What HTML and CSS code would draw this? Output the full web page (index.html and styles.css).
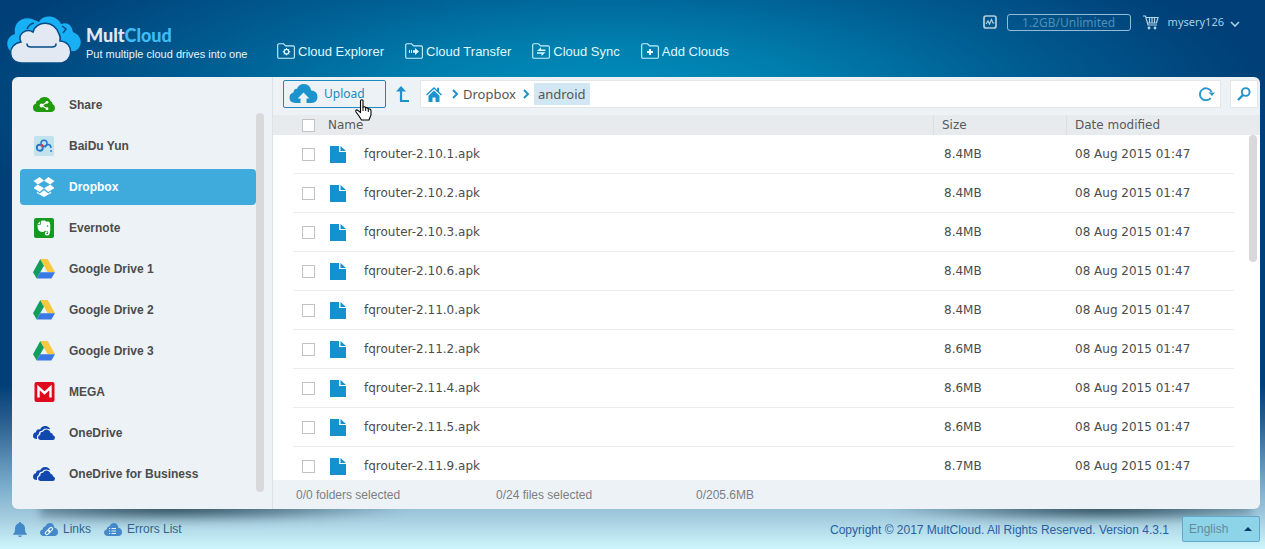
FILE: index.html
```
<!DOCTYPE html>
<html lang="en">
<head>
<meta charset="utf-8">
<title>MultCloud</title>
<link rel="stylesheet" href="styles.css">
</head>
<body>
<svg class="defs" aria-hidden="true">
  <symbol id="folder" viewBox="0 0 18 16"><path d="M.7 14V2Q.7.8 2 .8h4.6l2 2.1H16q1.400 0 1.400 1.300V14q0 1.300-1.400 1.300H2Q.7 15.300.7 14Z" fill="none" stroke="#c9f1fb" stroke-width="1.100"/></symbol>
  <symbol id="gdrive" viewBox="0 0 22 20"><path d="M7.300 0 11 6.500 3.700 19.500 0 13.200Z" fill="#119e5c"/><path d="M7.300 0h7.400L22 13.200h-7.400Z" fill="#f8c83e"/><path d="M7.300 13.200H22l-3.600 6.300H3.700Z" fill="#3a78e8"/></symbol>
  <symbol id="onedrive" viewBox="0 0 22 15"><path d="M0 10.500C0 8 1.500 7 3 6.800 3 4.500 5 3.500 7 4 8.500.7 11.500 0 14 .8q2.500.8 3.300 3L15.500 3.500Q11.500 2 9 5.200 5.800 5.300 5.800 8.700 3.500 9.500 4 13.500 0 13.500 0 10.500Z" fill="#1048ae"/><path d="M7.500 14.600Q5 14.300 5 11.900q.2-2.200 2.300-2.400Q7 6.300 10 6.200 11.700 3.300 14.800 4.200q2.400.8 2.900 3.400 2.100-.1 2.300 2.100 2 .6 2 2.400 0 2.500-2.400 2.500Z" fill="#1048ae"/></symbol>
  <symbol id="cloud" viewBox="0 0 18 13"><path d="M4 13C1.500 13 0 11.500 0 9.600 0 7.800 1.200 6.700 2.800 6.400 2.800 4.300 4.200 3.400 5.400 3.500 6.200 1.200 7.800 0 10 0q3.800.2 4.400 4.800Q18 5.600 18 9q0 4-4 4Z" fill="#4389c9"/></symbol>
  <symbol id="file" viewBox="0 0 16 17"><path d="M0 0h9v6h7v11H0Z" fill="#1592ce"/><path d="M10.500 0 16 5h-5.500Z" fill="#1592ce"/></symbol>
  <symbol id="chev" viewBox="0 0 7 10"><path d="m1 1 4 4-4 4" fill="none" stroke="#1c93cc" stroke-width="2"/></symbol>
</svg>
<div class="app">
<header class="top">
  <a class="brand" href="#">
    <svg class="logo" viewBox="0 0 74 48" aria-hidden="true"><path d="M6 37C-2 33-2 21 8 18 6 7 15 0 25 3l7 3C36-2 50-1 54 8q10-3 12 8c10 4 10 15 2 19Z" fill="#18b0f4"/><path d="M15 47C0 47 0 28 14 26 10 18 19 12 26 16 29 4 48 4 52 18q2 3 1 7c15 1 14 22-1 22Z" fill="#e2e9f3" stroke="#044b85" stroke-width="1.500"/><path d="M20 13q2-5 7-6M55 10l4 3-3 4" fill="none" stroke="#044b85" stroke-width="1.500"/><path d="M20 28q0 3 4 3h21q4 0 4-3" fill="none" stroke="#044b85" stroke-width="1.500" stroke-linecap="round"/></svg>
    <span class="brand-text"><span class="name">Mult<b>Cloud</b></span><span class="slogan">Put multiple cloud drives into one</span></span>
  </a>
  <nav class="nav">
    <a href="#"><svg viewBox="0 0 18 16"><use href="#folder"/><circle cx="9.500" cy="8.700" r="2.300" fill="none" stroke="#d9f7fd" stroke-width="1.400"/><path d="M9.500 5v1.200M9.500 11.200v1.200M5.800 8.700H7M12 8.700h1.200M6.900 6.100l.8.800M11.300 10.500l.8.800M6.900 11.300l.8-.8M11.300 6.900l.8-.8" stroke="#d9f7fd"/></svg>Cloud Explorer</a>
    <a href="#"><svg viewBox="0 0 18 16"><use href="#folder"/><path d="M4.500 7v3M6.500 7v3" stroke="#d9f7fd"/><path d="M8 7.300h2V5l4 3.500-4 3.500V9.700H8Z" fill="#d9f7fd"/></svg>Cloud Transfer</a>
    <a href="#"><svg viewBox="0 0 18 16"><use href="#folder"/><path d="M5 8 9 4.300v2.200h4.500V8ZM13.500 9.200 9.500 13v-2.300H5V9.200Z" fill="#d9f7fd"/></svg>Cloud Sync</a>
    <a href="#"><svg viewBox="0 0 18 16"><use href="#folder"/><path d="M9 6v6M6 9h6" stroke="#e5fbff" stroke-width="2"/></svg>Add Clouds</a>
  </nav>
  <div class="account">
    <svg class="meter" viewBox="0 0 14 14"><rect x="1" y="1" width="12" height="12" rx="2" fill="none" stroke="#b4cfdd" stroke-width="1.700"/><path d="m3 9 2-3 1.500 3L8.500 4.500 10 8h1.500" fill="none" stroke="#b4cfdd" stroke-width="1.200"/></svg>
    <span class="quota">1.2GB/Unlimited</span>
    <svg class="cart" viewBox="0 0 16 15"><path d="M0 1h2.500L5 10h9M3 2.500h12L13.500 8H4.500M6.500 3v5M9 3v5M11.500 3v5" fill="none" stroke="#b4d4e8" stroke-width="1.200"/><circle cx="6" cy="13" r="1.400" fill="#b4d4e8"/><circle cx="12" cy="13" r="1.400" fill="#b4d4e8"/></svg>
    <button class="user">mysery126<svg viewBox="0 0 10 6"><path d="m1 1 4 4 4-4" fill="none" stroke="#a9cfe8" stroke-width="1.600"/></svg></button>
  </div>
</header>
<div class="stage">
<div class="panel">
  <aside class="side">
    <ul>
      <li><a href="#"><svg viewBox="0 0 22 20"><path d="M4 17Q0 16.500 0 12.500 0 9.500 2.800 8.700 3 5.500 6 5.300 7.500 2 11.500 2 16 2 17.700 6.300 19.500 6.600 19.500 9 22 10 22 13t-3.500 4Z" fill="#219a0d"/><path d="m14.500 7-6 3.500 6 3.500" fill="none" stroke="#fff" stroke-width="1.200"/><circle cx="14" cy="7.300" r="1.400" fill="#fff"/><circle cx="8.500" cy="10.500" r="1.900" fill="#fff"/><circle cx="14" cy="13.700" r="1.400" fill="#fff"/></svg>Share</a></li>
      <li><a href="#"><svg viewBox="0 0 22 20"><rect x="1" width="20" height="20" rx="1.500" fill="#c2e3ee"/><circle cx="6.800" cy="11.800" r="3" fill="none" stroke="#2278c8" stroke-width="1.900"/><circle cx="11" cy="7.300" r="3" fill="none" stroke="#2278c8" stroke-width="1.500"/><path d="M12 11.500q1-3.500 3.500-3t2.500 3.500" fill="none" stroke="#2278c8" stroke-width="1.400"/><circle cx="9" cy="9.600" r="1.500" fill="#e8394d"/><circle cx="18" cy="15" r=".9" fill="#2278c8"/></svg>BaiDu Yun</a></li>
      <li><a class="on" href="#"><svg viewBox="0 0 22 21" fill="#fff"><path d="M6.500 0 0 4.300l4.500 3.600L11 3.900ZM15.500 0 11 3.900l6.500 4L22 4.300ZM0 11.500l4.500-3.600 6.500 4-4.500 3.800ZM22 11.500l-4.500-3.600-6.500 4 4.500 3.800ZM3.500 15.300l3 2L11 13.800l4.500 3.500 3-2v1.500L11 21l-7.500-4.200Z"/></svg>Dropbox</a></li>
      <li><a href="#"><svg viewBox="0 0 22 20"><rect x="1" width="20" height="20" rx="2" fill="#149a21"/><path d="M4.500 6.800h3.300V3.200l1.200-.6h3l1 1h2.500q1.500.3 1.700 3 .5 5.500-.7 9.500-.5 1.500-2.500 1.500-2.200-.2-2.200-2.200t2-2h.5v1.700h-1v1h1.600q.9-2-.3-3.100-1.700.8-2.600-.4-.5 1.600-2.800 1.300-2.500-.2-3.500-1.400Q4.300 10 4.500 6.800ZM4.600 5.900 7 3.400v2.500Z" fill="#fff"/><circle cx="14.500" cy="8" r=".8" fill="#149a21"/></svg>Evernote</a></li>
      <li><a href="#"><svg><use href="#gdrive"/></svg>Google Drive 1</a></li>
      <li><a href="#"><svg><use href="#gdrive"/></svg>Google Drive 2</a></li>
      <li><a href="#"><svg><use href="#gdrive"/></svg>Google Drive 3</a></li>
      <li><a href="#"><svg viewBox="0 0 22 20"><rect x="1.500" width="20" height="20" rx="2" fill="#df0a1c"/><path d="M5.500 15.500V5.500l6 5.500 6-5.500v10" fill="none" stroke="#fff" stroke-width="2.400"/></svg>MEGA</a></li>
      <li><a href="#"><svg><use href="#onedrive"/></svg>OneDrive</a></li>
      <li><a href="#"><svg><use href="#onedrive"/></svg>OneDrive for Business</a></li>
    </ul>
    <div class="track"></div>
  </aside>
  <main class="main">
    <div class="tools">
      <button class="upload"><svg viewBox="0 0 28 20"><path d="M6 19Q0 18.500 0 13.500 0 9.500 4 8.500 4 5 7.500 4.700 9 0 14.500 0 20.500.3 21.700 6.500 28 7 28 13q0 5.500-6 6h-5v-4.500h2.800L14 8.500l-5.800 6H11V19Z" fill="#1c93cc"/></svg>Upload
        <svg class="pointer" viewBox="0 0 17 22"><path d="M5.500 13.500V2q0-1.300 1.300-1.300T8 2v6q2-.8 2.700.8 2-.5 2.500 1Q16 9.500 16 12v4l-2 5H6.500L4 17l-3-4q-.8-2 1-2.200Z" fill="#fff" stroke="#000" stroke-width="1.100"/><path d="M8 8v4M10.700 8.800V12M13.300 9.800V13" stroke="#000"/></svg></button>
      <button class="up" aria-label="Up one level"><svg viewBox="0 0 14 17"><path d="M6 15V4" stroke="#1c93cc" stroke-width="2.200"/><path d="M1 5.500 6 0l5 5.500Z" fill="#1c93cc"/><path d="M5 14.900H14" stroke="#1c93cc" stroke-width="2"/></svg></button>
      <div class="path">
        <a class="home" href="#" aria-label="Home"><svg viewBox="0 0 16 15"><path d="M8 0 0 7.500l1 1 7-6.500 7 6.500 1-1-3-2.800V.8h-1.900V3ZM8 3.600 2.500 8.700V15h4v-4.500h3V15h4V8.700Z" fill="#1c93cc"/></svg></a>
        <svg class="chev"><use href="#chev"/></svg><a href="#">Dropbox</a><svg class="chev"><use href="#chev"/></svg><a class="here" href="#">android</a>
        <button class="reload" aria-label="Refresh"><svg viewBox="0 0 16 14"><path d="M11.700 11A6 6 0 1 1 12.500 5" fill="none" stroke="#2a98cc" stroke-width="1.900"/><path d="M9.500 5.500H16L13 9Z" fill="#2a98cc"/></svg></button>
      </div>
      <button class="search" aria-label="Search"><svg viewBox="0 0 14 14"><circle cx="8.700" cy="5" r="3.900" fill="none" stroke="#2293c8" stroke-width="1.900"/><path d="m6 8-5 5" stroke="#2293c8" stroke-width="2.400"/></svg></button>
    </div>
    <div class="list">
      <table>
        <colgroup><col class="c-check"><col class="c-name"><col class="c-size"><col class="c-date"></colgroup>
        <thead><tr><th><input type="checkbox" aria-label="Select all"></th><th>Name</th><th>Size</th><th>Date modified</th></tr></thead>
        <tbody>
          <tr><td><input type="checkbox" id="f1"></td><td><label for="f1"><svg><use href="#file"/></svg>fqrouter-2.10.1.apk</label></td><td>8.4MB</td><td>08 Aug 2015 01:47</td></tr>
          <tr><td><input type="checkbox" id="f2"></td><td><label for="f2"><svg><use href="#file"/></svg>fqrouter-2.10.2.apk</label></td><td>8.4MB</td><td>08 Aug 2015 01:47</td></tr>
          <tr><td><input type="checkbox" id="f3"></td><td><label for="f3"><svg><use href="#file"/></svg>fqrouter-2.10.3.apk</label></td><td>8.4MB</td><td>08 Aug 2015 01:47</td></tr>
          <tr><td><input type="checkbox" id="f4"></td><td><label for="f4"><svg><use href="#file"/></svg>fqrouter-2.10.6.apk</label></td><td>8.4MB</td><td>08 Aug 2015 01:47</td></tr>
          <tr><td><input type="checkbox" id="f5"></td><td><label for="f5"><svg><use href="#file"/></svg>fqrouter-2.11.0.apk</label></td><td>8.4MB</td><td>08 Aug 2015 01:47</td></tr>
          <tr><td><input type="checkbox" id="f6"></td><td><label for="f6"><svg><use href="#file"/></svg>fqrouter-2.11.2.apk</label></td><td>8.6MB</td><td>08 Aug 2015 01:47</td></tr>
          <tr><td><input type="checkbox" id="f7"></td><td><label for="f7"><svg><use href="#file"/></svg>fqrouter-2.11.4.apk</label></td><td>8.6MB</td><td>08 Aug 2015 01:47</td></tr>
          <tr><td><input type="checkbox" id="f8"></td><td><label for="f8"><svg><use href="#file"/></svg>fqrouter-2.11.5.apk</label></td><td>8.6MB</td><td>08 Aug 2015 01:47</td></tr>
          <tr><td><input type="checkbox" id="f9"></td><td><label for="f9"><svg><use href="#file"/></svg>fqrouter-2.11.9.apk</label></td><td>8.7MB</td><td>08 Aug 2015 01:47</td></tr>
        </tbody>
      </table>
      <div class="thumb"></div>
    </div>
    <div class="status"><span>0/0 folders selected</span><span>0/24 files selected</span><span>0/205.6MB</span></div>
  </main>
</div>
</div>
<footer class="foot">
  <a class="bell" href="#" aria-label="Notifications"><svg viewBox="0 0 14 15"><path d="M7 0q1.200 0 1.300 1.300Q12 2.300 12 7q0 4 2 5v.8H0V12q2-1 2-5 0-4.700 3.700-5.700Q5.800 0 7 0ZM5 13.500h4Q8.500 15 7 15t-2-1.500Z" fill="#4389c9"/></svg></a>
  <a href="#"><svg viewBox="0 0 18 13"><use href="#cloud"/><g fill="none" stroke="#e4f4fb" stroke-width="1.200" transform="rotate(-45 9 8)"><rect x="4.500" y="6.500" width="5" height="3" rx="1.500"/><rect x="8.500" y="6.500" width="5" height="3" rx="1.500"/></g></svg>Links</a>
  <a href="#"><svg viewBox="0 0 18 13"><use href="#cloud"/><path d="M5 5.500h1.200M5 8h1.200M5 10.500h1.200M7.500 5.500H12M7.500 8H12M7.500 10.500H12" stroke="#e4f4fb" stroke-width="1.200"/></svg>Errors List</a>
  <p class="copy">Copyright © 2017 MultCloud. All Rights Reserved. Version 4.3.1</p>
  <div class="lang"><select aria-label="Language"><option>English</option></select></div>
</footer>
</div>
</body>
</html>
```
FILE: styles.css
```
* { box-sizing: border-box; }
body { margin: 0; font: 12px/16px "Liberation Sans", Arial, sans-serif; color: #4c4c4c; }
a { color: inherit; text-decoration: none; }
button { font: inherit; color: inherit; background: none; border: 0; padding: 0; cursor: pointer; }
svg { display: block; flex: none; }
.defs { position: absolute; width: 0; height: 0; }

.app {
  height: 100vh;
  display: flex;
  flex-direction: column;
  background:
    linear-gradient(to bottom, transparent 70%, #2b6090 77%, #7db0ce 89%, #a3cadd 94%, #cdf6fc 100%),
    radial-gradient(ellipse 660px 190px at 48% 100px, #0090bd, #007fae 30%, #005c91 65%, #003f77 100%);
}

.top { flex: none; height: 77px; display: flex; padding: 0 25px 0 7px; }
.brand { display: flex; gap: 5px; width: 270px; padding-top: 16px; }
.logo { width: 74px; height: 48px; }
.brand-text { display: flex; flex-direction: column; padding-top: 9px; color: #e6f5fd; }
.name { font: 900 18px/20px Lato, sans-serif; color: #e2e9f3; }
.name b { font-weight: 900; color: #3ebcf5; }
.slogan { font-size: 11px; line-height: 18px; white-space: nowrap; }
.nav { display: flex; gap: 21px; height: 16px; margin-top: 43px; font-size: 13px; line-height: 17px; color: #dff8ff; white-space: nowrap; }
.nav a { display: flex; gap: 3px; }
.nav svg { width: 18px; height: 16px; }
.account { display: flex; align-items: center; height: 18px; margin: 13px 0 0 auto; font-family: "Noto Sans", sans-serif; color: #a9cfe8; }
.meter { width: 14px; height: 14px; }
.quota { width: 124px; height: 17px; margin: 0 12px 0 10px; border: 1px solid #8fbddb; border-radius: 3px; text-align: center; line-height: 15px; color: #4f8fb8; }
.cart { width: 16px; height: 15px; }
.user { display: flex; align-items: center; gap: 6px; margin-left: 9px; font-size: 11px; }
.user svg { width: 10px; height: 6px; margin-top: 4px; }

.stage { flex: 1; min-height: 0; position: relative; z-index: 0; margin: 0 5px 0 12px; }
.stage::before, .stage::after { content: ""; position: absolute; z-index: -1; bottom: -14px; width: 30%; height: 28px; filter: blur(4px); }
.stage::before { left: 28px; background: radial-gradient(ellipse at 35% 45%, #23414f, #23414f00 70%); }
.stage::after { right: 8px; background: radial-gradient(ellipse at 60% 45%, #23414f, #23414f00 70%); }
.panel { height: 100%; display: flex; overflow: hidden; border-radius: 6px; background: #edf2f6; }

.side { flex: none; display: flex; width: 261px; padding: 10px 8px 0; border-right: 1px solid #dbe1e5; font-weight: bold; }
.side ul { flex: 1; display: flex; flex-direction: column; gap: 5px; margin: 0; padding: 0; list-style: none; }
.side a { display: flex; align-items: center; gap: 14px; height: 36px; padding-left: 13px; border-radius: 4px; }
.side svg { width: 22px; height: 20px; }
.side .on { background: #3fabdd; color: #fff; }
.track { flex: none; width: 8px; margin: 26px 0 17px; border-radius: 4px; background: #d9d9db; }

.main { flex: 1; min-width: 0; display: flex; flex-direction: column; font-family: "DejaVu Sans", Verdana, sans-serif; }
.tools { flex: none; display: flex; height: 38px; padding: 3px 2px 7px 10px; font-family: "Noto Sans", sans-serif; }
.upload { position: relative; display: flex; align-items: center; gap: 6px; width: 103px; padding-left: 5px; border: 1px solid #1c88c0; border-radius: 2px; color: #2088bf; }
.upload svg { width: 29px; height: 20px; }
.upload .pointer { position: absolute; left: 71px; top: 18px; z-index: 2; width: 17px; height: 22px; }
.up { margin: 0 11px 0 9px; }
.up svg { width: 14px; height: 17px; }
.path { flex: 1; display: flex; align-items: center; padding: 0 5px; background: #fff; border: 1px solid #e3e7ea; color: #555; font-size: 13px; }
.home svg { width: 16px; height: 15px; margin-right: 10px; }
.chev { width: 7px; height: 10px; margin-right: 4px; }
.chev ~ .chev { margin: 0 4px 0 7px; }
.here { padding: 3px 4px; line-height: 16px; background: #d2e6f3; }
.reload { margin-left: auto; }
.reload svg { width: 16px; height: 14px; }
.search { display: flex; align-items: center; justify-content: center; width: 28px; margin-left: 9px; background: #fff; border: 1px solid #e3e7ea; }
.search svg { width: 14px; height: 14px; }

.list { flex: 1; min-height: 0; position: relative; overflow: hidden; padding: 0 26px 0 20px; background: linear-gradient(#e7ebee 20px, #fff 20px); }
table { width: 100%; table-layout: fixed; border-collapse: separate; border-spacing: 0; }
.c-check { width: 35px; }
.c-size { width: 133px; }
.c-date { width: 168px; }
th { height: 20px; padding: 0; text-align: left; font-weight: normal; line-height: 18px; color: #595959; }
th:nth-child(n+3) { padding-left: 8px; border-left: 1px solid #dbe0e3; }
td { height: 39px; padding: 0; border-bottom: 1px solid #ececec; color: #4c4c4c; }
td:nth-child(3) { padding-left: 11px; }
td:nth-child(4) { padding-left: 9px; }
td label { display: flex; align-items: center; gap: 18px; padding-left: 2px; }
td svg { width: 16px; height: 17px; }
input { display: block; appearance: none; width: 13px; height: 13px; margin: 0 0 0 9px; background: #fff; border: 1px solid #c3c3c3; }
.thumb { position: absolute; right: 3px; top: 20px; width: 8px; height: 127px; border-radius: 4px; background: #d9d9d9; }
.status { flex: none; display: flex; height: 29px; padding-left: 23px; font: 12px/30px "Liberation Sans", Arial, sans-serif; color: #7c7f82; }
.status span { width: 200px; }

.foot { flex: none; display: flex; align-items: flex-start; gap: 13px; height: 40px; padding: 7px 5px 0 13px; color: #35648a; }
.foot a { display: flex; align-items: center; gap: 5px; height: 26px; position: relative; }
.foot svg { width: 18px; height: 13px; }
.foot .bell svg { width: 14px; height: 15px; }
.copy { position: relative; margin: 0 0 0 auto; line-height: 29px; color: #27619f; }
.lang { position: relative; }
.lang::after { content: ""; position: absolute; right: 8px; top: 11px; border: 4px solid transparent; border-top: 0; border-bottom: 4px solid #063a69; pointer-events: none; }
select { display: block; appearance: none; width: 78px; height: 26px; padding: 0 6px; font: inherit; color: #668b9c; background: #8dd4e9; border: 1px solid #5fa9cc; border-radius: 2px; }
```
